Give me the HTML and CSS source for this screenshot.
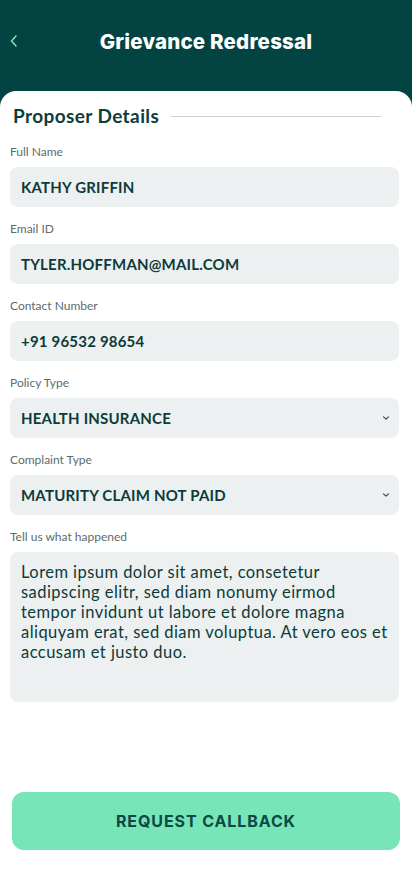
FILE: index.html
```html
<!DOCTYPE html>
<html lang="en">
<head>
<meta charset="utf-8">
<title>Grievance Redressal</title>
<link rel="stylesheet" href="styles.css">
</head>
<body>
<header class="topbar">
  <button class="back" aria-label="Back">
    <svg width="10" height="14" viewBox="0 0 10 14"><path d="M7 2 L2.5 7 L7 12" fill="none" stroke="#74e2b5" stroke-width="1.6" stroke-linecap="round" stroke-linejoin="round"/></svg>
  </button>
  <h1 class="title">Grievance Redressal</h1>
</header>
<main class="card">
  <div class="section-head">
    <h2>Proposer Details</h2>
    <span class="rule"></span>
  </div>
  <div class="field">
    <label>Full Name</label>
    <div class="input">KATHY GRIFFIN</div>
  </div>
  <div class="field">
    <label>Email ID</label>
    <div class="input">TYLER.HOFFMAN@MAIL.COM</div>
  </div>
  <div class="field">
    <label>Contact Number</label>
    <div class="input">+91 96532 98654</div>
  </div>
  <div class="field">
    <label>Policy Type</label>
    <div class="input select">HEALTH INSURANCE
      <svg class="caret" width="8" height="6" viewBox="0 0 8 6"><path d="M1.5 1.8 L4 4.2 L6.5 1.8" fill="none" stroke="#2c4a4a" stroke-width="1.1" stroke-linecap="round" stroke-linejoin="round"/></svg>
    </div>
  </div>
  <div class="field">
    <label>Complaint Type</label>
    <div class="input select">MATURITY CLAIM NOT PAID
      <svg class="caret" width="8" height="6" viewBox="0 0 8 6"><path d="M1.5 1.8 L4 4.2 L6.5 1.8" fill="none" stroke="#2c4a4a" stroke-width="1.1" stroke-linecap="round" stroke-linejoin="round"/></svg>
    </div>
  </div>
  <div class="field">
    <label>Tell us what happened</label>
    <div class="textarea">Lorem ipsum dolor sit amet, consetetur sadipscing elitr, sed diam nonumy eirmod tempor invidunt ut labore et dolore magna aliquyam erat, sed diam voluptua. At vero eos et accusam et justo duo.</div>
  </div>
  <button class="cta">REQUEST CALLBACK</button>
</main>
</body>
</html>
```
FILE: styles.css
```css
* { box-sizing: border-box; }
html, body { margin: 0; padding: 0; }
body {
  background: #034443;
  font-family: Lato, "Noto Sans", sans-serif;
  width: 412px;
  min-height: 870px;
}
.topbar {
  height: 91px;
  display: flex;
  align-items: center;
  justify-content: center;
  position: relative;
  padding-bottom: 8px;
}
.back {
  position: absolute;
  left: 8px;
  top: 34px;
  background: none;
  border: 0;
  padding: 0;
  width: 12px;
  height: 14px;
}
.title {
  margin: 0;
  color: #ffffff;
  font-family: Inter, sans-serif;
  font-weight: 800;
  font-size: 20.5px;
  letter-spacing: 0.2px;
}
.card {
  background: #ffffff;
  border-radius: 16px 16px 0 0;
  min-height: 779px;
  padding: 13px 13px 21px 10px;
  display: flex;
  flex-direction: column;
}
.section-head {
  display: flex;
  align-items: center;
  gap: 12px;
  padding-left: 3px;
  padding-right: 18px;
  margin-bottom: 16px;
}
.section-head h2 {
  margin: 0;
  font-family: Lato, sans-serif;
  font-weight: 700;
  font-size: 19px;
  line-height: 24px;
  color: #0b3d3c;
  letter-spacing: 0.4px;
  white-space: nowrap;
}
.rule {
  flex: 1;
  height: 1px;
  background: #c9d2d2;
}
.field {
  display: flex;
  flex-direction: column;
  margin-bottom: 14px;
}
.field label {
  font-size: 12px;
  line-height: 16px;
  color: #5a6d6d;
  font-weight: 400;
  margin-bottom: 7px;
}
.input {
  height: 40px;
  background: #ecf0f0;
  border-radius: 8px;
  display: flex;
  align-items: center;
  padding: 0 11px;
  font-size: 15px;
  font-weight: 700;
  color: #0c3b3a;
  letter-spacing: 0.2px;
}
.select { justify-content: space-between; }
.caret { margin-right: -2px; }
.textarea {
  height: 150px;
  background: #ecf0f0;
  border-radius: 8px;
  padding: 10px 11px;
  font-size: 16.5px;
  line-height: 20px;
  letter-spacing: 0.45px;
  color: #0c3b3a;
}
.cta {
  margin-top: 76px;
  margin-left: 2px;
  margin-right: -1px;
  height: 58px;
  border: 0;
  border-radius: 12px;
  background: #77e5b8;
  color: #0b4a44;
  font-family: Inter, sans-serif;
  font-weight: 700;
  font-size: 16px;
  letter-spacing: 0.9px;
}
```
